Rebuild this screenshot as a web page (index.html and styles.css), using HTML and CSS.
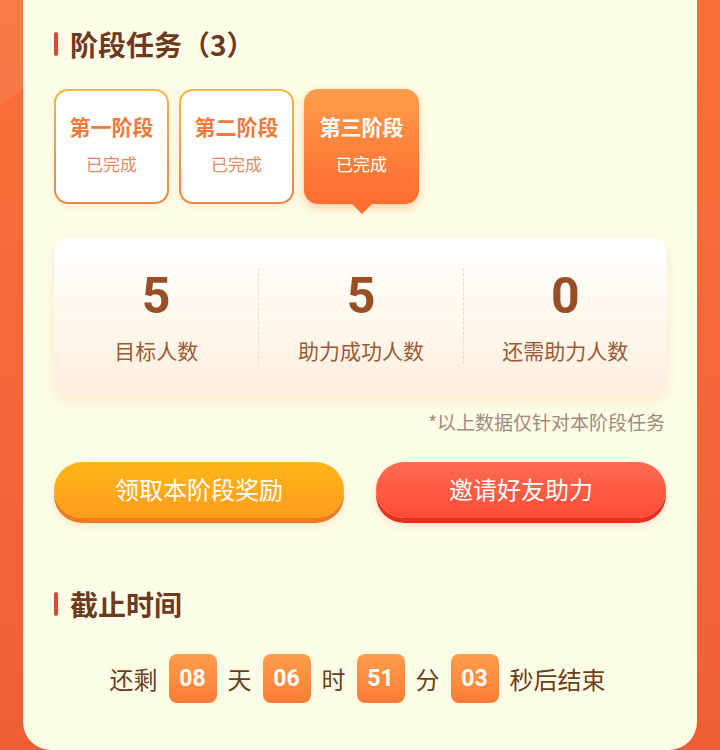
FILE: index.html
```html
<!DOCTYPE html>
<html lang="zh">
<head>
<meta charset="utf-8">
<title>阶段任务</title>
<link rel="stylesheet" href="styles.css">
</head>
<body>
<div class="panel">
  <h2 class="sec-title"><span class="bar"></span>阶段任务（3）</h2>
  <div class="stages">
    <div class="stage"><div class="stage-name">第一阶段</div><div class="stage-state">已完成</div></div>
    <div class="stage"><div class="stage-name">第二阶段</div><div class="stage-state">已完成</div></div>
    <div class="stage active"><div class="stage-name">第三阶段</div><div class="stage-state">已完成</div></div>
  </div>
  <div class="stats">
    <div class="stat"><div class="num">5</div><div class="label">目标人数</div></div>
    <div class="stat"><div class="num">5</div><div class="label">助力成功人数</div></div>
    <div class="stat"><div class="num">0</div><div class="label">还需助力人数</div></div>
  </div>
  <p class="note">*以上数据仅针对本阶段任务</p>
  <div class="actions">
    <button class="btn btn-gold">领取本阶段奖励</button>
    <button class="btn btn-red">邀请好友助力</button>
  </div>
  <h2 class="sec-title deadline"><span class="bar"></span>截止时间</h2>
  <div class="countdown">
    <span class="ct">还剩</span>
    <span class="box">08</span>
    <span class="ct">天</span>
    <span class="box">06</span>
    <span class="ct">时</span>
    <span class="box">51</span>
    <span class="ct">分</span>
    <span class="box">03</span>
    <span class="ct">秒后结束</span>
  </div>
</div>
</body>
</html>
```
FILE: styles.css
```css
* { box-sizing: border-box; }
html, body { margin: 0; padding: 0; }
body {
  width: 720px;
  height: 750px;
  overflow: hidden;
  font-family: "Noto Sans CJK SC", "Noto Sans", sans-serif;
  background:
    linear-gradient(150deg, rgba(255,255,255,0.07) 0 90px, transparent 90px),
    linear-gradient(180deg, #f97039 0%, #f5663a 55%, #f05e36 100%);
}
.panel {
  margin: 0 23px;
  height: 750px;
  background: #fcfde7;
  border-radius: 0 0 28px 28px;
  padding: 26px 30px 0 31px;
}
.sec-title {
  margin: 0;
  display: flex;
  align-items: center;
  gap: 12px;
  font-size: 28px;
  line-height: 36px;
  font-weight: 700;
  color: #6d3a1d;
}
.bar {
  display: block;
  width: 4px;
  height: 24px;
  border-radius: 2px;
  background: #e0483e;
}
.stages {
  display: flex;
  gap: 10px;
  margin-top: 27px;
}
.stage {
  position: relative;
  width: 115px;
  height: 115px;
  border-radius: 14px;
  border: 2px solid transparent;
  background:
    linear-gradient(#ffffff, #ffffff) padding-box,
    linear-gradient(180deg, #f6b744, #f08244) border-box;
  box-shadow: 0 3px 8px rgba(240, 150, 80, 0.12);
  display: flex;
  flex-direction: column;
  align-items: center;
  padding-top: 21px;
  gap: 12px;
}
.stage-name {
  font-size: 21px;
  line-height: 28px;
  font-weight: 700;
  color: #f07a3a;
}
.stage-state {
  font-size: 17px;
  line-height: 24px;
  color: #e98a5c;
}
.stage.active {
  border: 0;
  padding-top: 23px;
  background: linear-gradient(180deg, #ff9d4c 0%, #ff7a38 70%, #ff6c30 100%);
  box-shadow: 0 4px 10px rgba(255, 120, 50, 0.35);
}
.stage.active .stage-name,
.stage.active .stage-state { color: #ffffff; }
.stage.active::after {
  content: "";
  position: absolute;
  left: 50%;
  bottom: -10px;
  margin-left: -10px;
  border-left: 10px solid transparent;
  border-right: 10px solid transparent;
  border-top: 10px solid #ff6e32;
}
.stats {
  margin-top: 34px;
  height: 158px;
  border-radius: 14px;
  background: linear-gradient(180deg, #ffffff 0%, #fff7ec 55%, #ffeedd 100%);
  box-shadow: 0 5px 12px rgba(240, 160, 100, 0.22);
  display: grid;
  grid-template-columns: 1fr 1fr 1fr;
  align-items: start;
}
.stat {
  margin-top: 30px;
  height: 96px;
  display: flex;
  flex-direction: column;
  align-items: center;
  gap: 12px;
}
.stat + .stat { border-left: 1px dashed #eadccc; }
.num {
  font-family: Roboto, "Liberation Sans", sans-serif;
  font-weight: 700;
  font-size: 50px;
  line-height: 56px;
  color: #9a4e26;
}
.label {
  font-size: 21px;
  line-height: 28px;
  color: #9b5a33;
}
.note {
  margin: 14px 0 0;
  text-align: right;
  padding-right: 2px;
  font-size: 19px;
  line-height: 24px;
  color: #a4897a;
}
.actions {
  display: flex;
  gap: 32px;
  margin-top: 28px;
}
.btn {
  width: 290px;
  height: 56px;
  border: 0;
  border-radius: 28px;
  font-family: "Noto Sans CJK SC", "Noto Sans", sans-serif;
  font-size: 24px;
  line-height: 30px;
  color: #ffffff;
  padding: 0 0 3px;
}
.btn-gold {
  background: linear-gradient(180deg, #ffb71a 0%, #ff9c1c 100%);
  box-shadow: 0 5px 0 #ec7a1e, 0 7px 8px rgba(236, 122, 30, 0.18);
}
.btn-red {
  background: linear-gradient(180deg, #ff6c50 0%, #ff4c36 100%);
  box-shadow: 0 5px 0 #e62f1c, 0 7px 8px rgba(230, 47, 28, 0.15);
}
.deadline { margin-top: 68px; }
.countdown {
  margin-top: 32px;
  display: flex;
  justify-content: center;
  align-items: center;
  gap: 11px;
  padding-right: 6px;
}
.ct {
  font-size: 24px;
  line-height: 32px;
  color: #6b3f22;
}
.box {
  width: 48px;
  height: 49px;
  border-radius: 8px;
  background: linear-gradient(180deg, #ff9e4c 0%, #ff7c36 100%);
  color: #ffffff;
  font-family: Roboto, "Liberation Sans", sans-serif;
  font-weight: 700;
  font-size: 23px;
  display: flex;
  align-items: center;
  justify-content: center;
}
```
